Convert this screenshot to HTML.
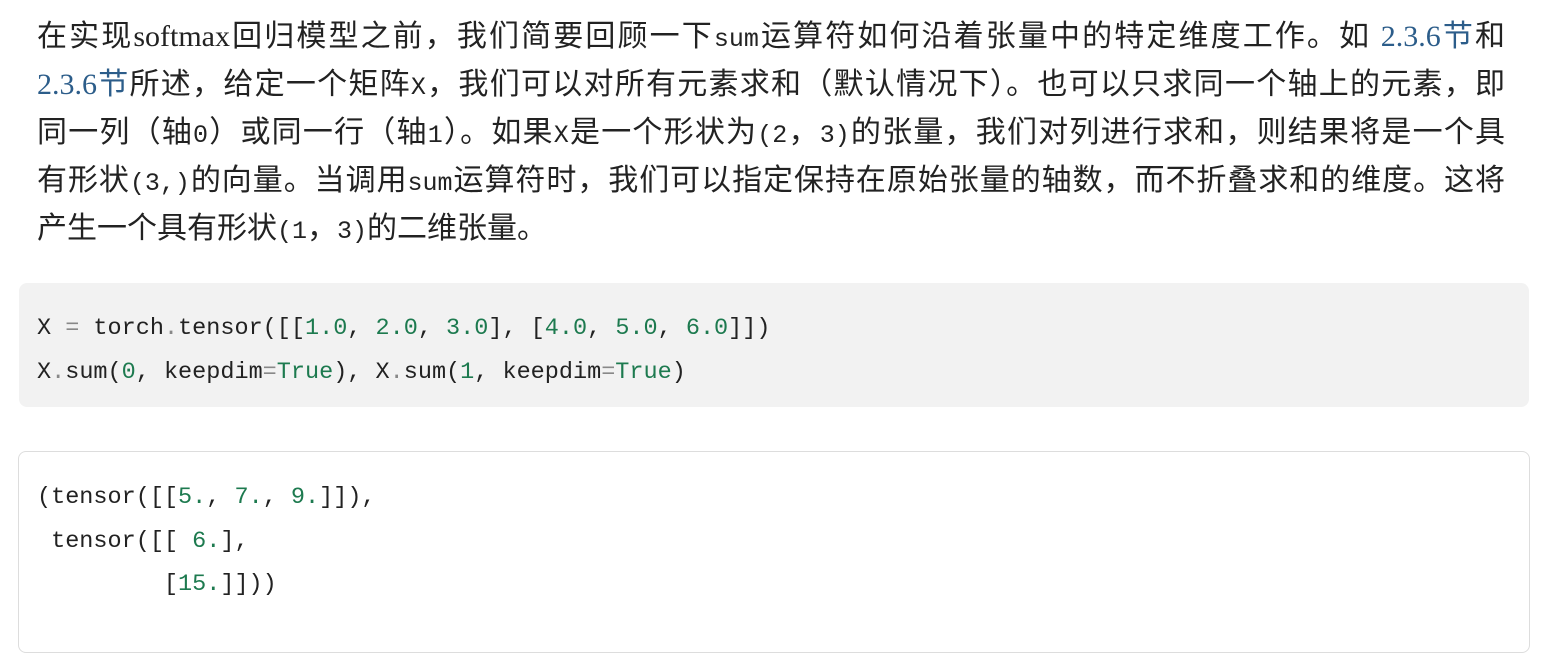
<!DOCTYPE html>
<html><head><meta charset="utf-8"><style>
body{margin:0;width:1568px;height:618px;overflow:hidden;background:#fff;}
.p{position:absolute;left:37px;width:1468px;font-family:"Liberation Serif","Noto Sans CJK SC",sans-serif;font-size:30px;color:#222;}
.l{height:48px;line-height:48px;text-align:justify;text-align-last:justify;white-space:nowrap;overflow:hidden}
.l span,.l a{line-height:0}
.l.last{text-align-last:left;}
.m{font-family:"Liberation Mono","Noto Sans CJK SC",monospace;font-size:25px;}
.w{font-family:"Noto Sans CJK SC",sans-serif;font-size:30px}
a{color:#2c5d8a;text-decoration:none}
.c1{position:absolute;left:19px;top:283px;width:1510px;height:124px;background:#f2f2f2;border-radius:8px;}
.c2{position:absolute;left:18px;top:451px;width:1510px;height:200px;border:1.5px solid #ddd;border-radius:8px;}
pre{margin:0;position:absolute;left:18px;font-family:"Liberation Mono",monospace;font-size:23.5px;line-height:43.5px;color:#222;}
.n{color:#1d7a4f}.o{color:#888}
</style></head><body>
<div class="p" style="top:13px">
<div class="l">在实现softmax回归模型之前，我们简要回顾一下<span class="m">sum</span>运算符如何沿着张量中的特定维度工作。如 <a>2.3.6节</a>和</div>
<div class="l"><a>2.3.6节</a>所述，给定一个矩阵<span class="m">X</span>，我们可以对所有元素求和（默认情况下）。也可以只求同一个轴上的元素，即</div>
<div class="l">同一列（轴<span class="m">0</span>）或同一行（轴<span class="m">1</span>）。如果<span class="m">X</span>是一个形状为<span class="m">(2<span class="w">，</span>3)</span>的张量，我们对列进行求和，则结果将是一个具</div>
<div class="l">有形状<span class="m">(3,)</span>的向量。当调用<span class="m">sum</span>运算符时，我们可以指定保持在原始张量的轴数，而不折叠求和的维度。这将</div>
<div class="l last">产生一个具有形状<span class="m">(1<span class="w">，</span>3)</span>的二维张量。</div>
</div>
<div class="c1"><pre style="top:24px">X <span class="o">=</span> torch<span class="o">.</span>tensor([[<span class="n">1.0</span>, <span class="n">2.0</span>, <span class="n">3.0</span>], [<span class="n">4.0</span>, <span class="n">5.0</span>, <span class="n">6.0</span>]])
X<span class="o">.</span>sum(<span class="n">0</span>, keepdim<span class="o">=</span><span class="n">True</span>), X<span class="o">.</span>sum(<span class="n">1</span>, keepdim<span class="o">=</span><span class="n">True</span>)</pre></div>
<div class="c2"><pre style="top:24px">(tensor([[<span class="n">5.</span>, <span class="n">7.</span>, <span class="n">9.</span>]]),
 tensor([[ <span class="n">6.</span>],
         [<span class="n">15.</span>]]))</pre></div>
</body></html>
